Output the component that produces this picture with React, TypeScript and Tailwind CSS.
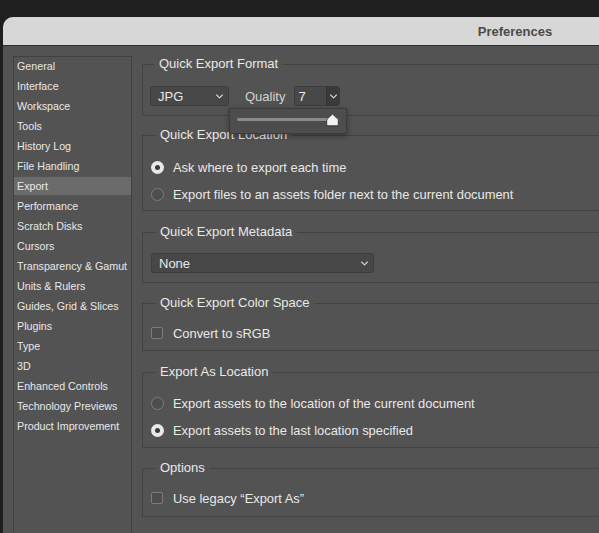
import React from "react";

const Chevron = () => (
  <svg width="7" height="5" viewBox="0 0 7 5" className="block">
    <path d="M0.6 1 L3.5 3.9 L6.4 1" fill="none" stroke="#d6d6d6" strokeWidth="1.1" strokeLinecap="round" strokeLinejoin="round" />
  </svg>
);

const Radio = ({ checked, label }: { checked?: boolean; label: string }) => (
  <div className="flex items-center h-[20px]">
    {checked ? (
      <div className="w-[13px] h-[13px] rounded-full bg-[#e9e9e9] flex items-center justify-center">
        <div className="w-[5px] h-[5px] rounded-full bg-[#3a3a3a]" />
      </div>
    ) : (
      <div className="w-[13px] h-[13px] rounded-full border border-[#7c7c7c] bg-[#4d4d4d]" />
    )}
    <span className="ml-[9px] text-[12.9px] text-[#e9e9e9] leading-[16px] pt-[1px]">{label}</span>
  </div>
);

const Checkbox = ({ label }: { label: string }) => (
  <div className="flex items-center h-[20px]">
    <div className="w-[12px] h-[12px] rounded-[2px] border border-[#7c7c7c] bg-[#4d4d4d]" />
    <span className="ml-[10px] text-[12.9px] text-[#e9e9e9] leading-[16px] pt-[1px]">{label}</span>
  </div>
);

const Legend = ({ children }: { children: React.ReactNode }) => (
  <legend className="ml-[4px] px-[5px] text-[13px] leading-[16px] text-[#e9e9e9]">{children}</legend>
);

const items = [
  "General",
  "Interface",
  "Workspace",
  "Tools",
  "History Log",
  "File Handling",
  "Export",
  "Performance",
  "Scratch Disks",
  "Cursors",
  "Transparency & Gamut",
  "Units & Rulers",
  "Guides, Grid & Slices",
  "Plugins",
  "Type",
  "3D",
  "Enhanced Controls",
  "Technology Previews",
  "Product Improvement",
];

export default function App() {
  return (
    <div className="w-[599px] h-[533px] overflow-hidden bg-[#1f1f1f] font-['Liberation_Sans',Arial,sans-serif]">
      <div className="ml-[3px] mt-[17px] w-[1024px] h-[700px] rounded-t-[10px] overflow-hidden bg-[#535353] flex flex-col">
        <div className="h-[29px] shrink-0 bg-[#d7d7d7] border-b border-[#2c2c2c] flex items-center justify-center">
          <span className="text-[13px] font-bold text-[#4b4b4b] pt-[2px]">Preferences</span>
        </div>
        <div className="flex pt-[10px] pl-[10px] pr-[10px]">
          <div className="w-[119px] h-[560px] shrink-0 border border-[#404040]">
            {items.map((it) => (
              <div
                key={it}
                className={`h-[18px] mb-[2px] pl-[3px] flex items-center text-[10.7px] text-[#e8e8e8] whitespace-nowrap ${
                  it === "Export" ? "bg-[#6b6b6b]" : ""
                }`}
              >
                {it}
              </div>
            ))}
          </div>
          <div className="flex-1 min-w-0 ml-[10px]">
            <fieldset className="border border-[#424242] pl-[7px] pt-[14px] pb-[9px]">
              <Legend>Quick Export Format</Legend>
              <div className="flex items-center">
                <div className="w-[79px] h-[20px] rounded-[3px] bg-[#474747] border border-[#3d3d3d] flex items-center justify-between pl-[7px] pr-[5px]">
                  <span className="text-[13px] text-[#e9e9e9] leading-[16px] pt-[1px]">JPG</span>
                  <Chevron />
                </div>
                <span className="ml-[16px] text-[13px] text-[#d2d2d2] leading-[16px] pt-[1px]">Quality</span>
                <div className="relative ml-[9px]">
                  <div className="w-[46px] h-[20px] flex rounded-[3px] border border-[#3b3b3b] overflow-hidden">
                    <div className="flex-1 bg-[#484848] pl-[3px] pt-[1px] flex items-center text-[13px] text-[#ececec] leading-[16px]">7</div>
                    <div className="w-[13px] bg-[#3a3a3a] border-l border-[#333333] flex items-center justify-center">
                      <Chevron />
                    </div>
                  </div>
                  <div className="absolute z-10 left-[-65px] top-[22px] w-[118px] h-[26px] bg-[#4d4d4d] border border-[#3c3c3c] shadow-[0_2px_6px_rgba(0,0,0,0.35)]">
                    <div className="absolute left-[7px] top-[9px] w-[102px] h-[3px] rounded-full bg-[#8a8a8a]" />
                    <svg className="absolute left-[96px] top-[4px]" width="13" height="14" viewBox="0 0 13 14">
                      <path
                        d="M6.5 1 L11.8 6 Q12.3 6.5 12.3 7.2 L12.3 11.5 Q12.3 12.8 11 12.8 L2 12.8 Q0.7 12.8 0.7 11.5 L0.7 7.2 Q0.7 6.5 1.2 6 Z"
                        fill="#f2f2f2"
                        stroke="#2f2f2f"
                        strokeWidth="0.9"
                        strokeLinejoin="round"
                      />
                    </svg>
                  </div>
                </div>
              </div>
            </fieldset>

            <fieldset className="mt-[11px] border border-[#424242] pl-[8px] pt-[14px] pb-[6px]">
              <Legend>Quick Export Location</Legend>
              <div className="flex flex-col gap-[7px]">
                <Radio checked label="Ask where to export each time" />
                <Radio label="Export files to an assets folder next to the current document" />
              </div>
            </fieldset>

            <fieldset className="mt-[13px] border border-[#424242] pl-[8px] pt-[13px] pb-[9px]">
              <Legend>Quick Export Metadata</Legend>
              <div className="w-[223px] h-[20px] rounded-[3px] bg-[#474747] border border-[#3d3d3d] flex items-center justify-between pl-[7px] pr-[5px]">
                <span className="text-[13px] text-[#e9e9e9] leading-[16px] pt-[1px]">None</span>
                <Chevron />
              </div>
            </fieldset>

            <fieldset className="mt-[12px] border border-[#424242] pl-[8px] pt-[12px] pb-[7px]">
              <Legend>Quick Export Color Space</Legend>
              <Checkbox label="Convert to sRGB" />
            </fieldset>

            <fieldset className="mt-[13px] border border-[#424242] pl-[8px] pt-[13px] pb-[7px]">
              <Legend>Export As Location</Legend>
              <div className="flex flex-col gap-[7px]">
                <Radio label="Export assets to the location of the current document" />
                <Radio checked label="Export assets to the last location specified" />
              </div>
            </fieldset>

            <fieldset className="mt-[12px] border border-[#424242] pl-[8px] pt-[12px] pb-[8px]">
              <Legend>Options</Legend>
              <Checkbox label={"Use legacy \u201CExport As\u201D"} />
            </fieldset>
          </div>
        </div>
      </div>
    </div>
  );
}
